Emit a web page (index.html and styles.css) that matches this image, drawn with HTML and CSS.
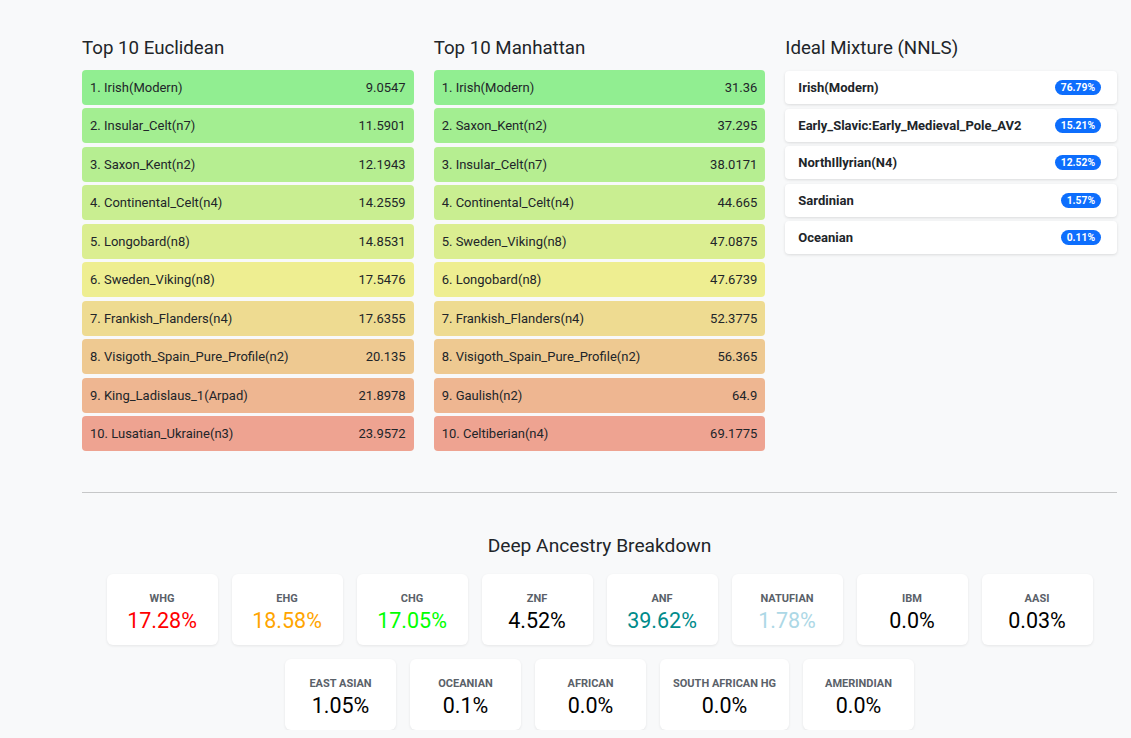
FILE: index.html
```html
<!DOCTYPE html>
<html lang="en">
<head>
<meta charset="utf-8">
<title>Ancestry Results</title>
<link rel="stylesheet" href="styles.css">
</head>
<body>
<main class="page">
  <div class="top">
    <section class="col">
      <h2 class="title">Top 10 Euclidean</h2>
      <ul class="dist-list">
        <li class="dist r1"><span>1. Irish(Modern)</span><span>9.0547</span></li>
        <li class="dist r2"><span>2. Insular_Celt(n7)</span><span>11.5901</span></li>
        <li class="dist r3"><span>3. Saxon_Kent(n2)</span><span>12.1943</span></li>
        <li class="dist r4"><span>4. Continental_Celt(n4)</span><span>14.2559</span></li>
        <li class="dist r5"><span>5. Longobard(n8)</span><span>14.8531</span></li>
        <li class="dist r6"><span>6. Sweden_Viking(n8)</span><span>17.5476</span></li>
        <li class="dist r7"><span>7. Frankish_Flanders(n4)</span><span>17.6355</span></li>
        <li class="dist r8"><span>8. Visigoth_Spain_Pure_Profile(n2)</span><span>20.135</span></li>
        <li class="dist r9"><span>9. King_Ladislaus_1(Arpad)</span><span>21.8978</span></li>
        <li class="dist r10"><span>10. Lusatian_Ukraine(n3)</span><span>23.9572</span></li>
      </ul>
    </section>
    <section class="col">
      <h2 class="title">Top 10 Manhattan</h2>
      <ul class="dist-list">
        <li class="dist r1"><span>1. Irish(Modern)</span><span>31.36</span></li>
        <li class="dist r2"><span>2. Saxon_Kent(n2)</span><span>37.295</span></li>
        <li class="dist r3"><span>3. Insular_Celt(n7)</span><span>38.0171</span></li>
        <li class="dist r4"><span>4. Continental_Celt(n4)</span><span>44.665</span></li>
        <li class="dist r5"><span>5. Sweden_Viking(n8)</span><span>47.0875</span></li>
        <li class="dist r6"><span>6. Longobard(n8)</span><span>47.6739</span></li>
        <li class="dist r7"><span>7. Frankish_Flanders(n4)</span><span>52.3775</span></li>
        <li class="dist r8"><span>8. Visigoth_Spain_Pure_Profile(n2)</span><span>56.365</span></li>
        <li class="dist r9"><span>9. Gaulish(n2)</span><span>64.9</span></li>
        <li class="dist r10"><span>10. Celtiberian(n4)</span><span>69.1775</span></li>
      </ul>
    </section>
    <section class="col">
      <h2 class="title">Ideal Mixture (NNLS)</h2>
      <ul class="mix-list">
        <li class="mix-item"><span class="mix-name">Irish(Modern)</span><span class="badge">76.79%</span></li>
        <li class="mix-item"><span class="mix-name">Early_Slavic:Early_Medieval_Pole_AV2</span><span class="badge">15.21%</span></li>
        <li class="mix-item"><span class="mix-name">NorthIllyrian(N4)</span><span class="badge">12.52%</span></li>
        <li class="mix-item"><span class="mix-name">Sardinian</span><span class="badge">1.57%</span></li>
        <li class="mix-item"><span class="mix-name">Oceanian</span><span class="badge">0.11%</span></li>
      </ul>
    </section>
  </div>

  <hr class="divider">

  <section class="deep">
    <h2 class="deep-title">Deep Ancestry Breakdown</h2>
    <div class="cards">
      <div class="card"><div class="label">WHG</div><div class="value c-red">17.28%</div></div>
      <div class="card"><div class="label">EHG</div><div class="value c-orange">18.58%</div></div>
      <div class="card"><div class="label">CHG</div><div class="value c-lime">17.05%</div></div>
      <div class="card"><div class="label">ZNF</div><div class="value">4.52%</div></div>
      <div class="card"><div class="label">ANF</div><div class="value c-teal">39.62%</div></div>
      <div class="card"><div class="label">NATUFIAN</div><div class="value c-lightblue">1.78%</div></div>
      <div class="card"><div class="label">IBM</div><div class="value">0.0%</div></div>
      <div class="card"><div class="label">AASI</div><div class="value">0.03%</div></div>
      <div class="card"><div class="label">EAST ASIAN</div><div class="value">1.05%</div></div>
      <div class="card"><div class="label">OCEANIAN</div><div class="value">0.1%</div></div>
      <div class="card"><div class="label">AFRICAN</div><div class="value">0.0%</div></div>
      <div class="card"><div class="label">SOUTH AFRICAN HG</div><div class="value">0.0%</div></div>
      <div class="card"><div class="label">AMERINDIAN</div><div class="value">0.0%</div></div>
    </div>
  </section>
</main>
</body>
</html>
```

FILE: styles.css
```css
* { box-sizing: border-box; }

html, body {
  margin: 0;
  padding: 0;
  background: #f8f9fa;
  color: #212529;
  font-family: Roboto, "Liberation Sans", sans-serif;
}

.page {
  width: 1035px;
  margin-left: 82px;
  padding-top: 37px;
}

.top {
  display: flex;
  gap: 20px;
  align-items: flex-start;
}

.col {
  flex: 1 1 0;
  min-width: 0;
}

.title {
  margin: 0 0 11px;
  font-size: 18.7px;
  font-weight: 400;
  line-height: 22px;
}

.dist-list, .mix-list {
  list-style: none;
  margin: 0;
  padding: 0;
  display: flex;
  flex-direction: column;
}

.dist-list { gap: 3.45px; }

.dist {
  height: 35px;
  display: flex;
  align-items: center;
  justify-content: space-between;
  padding: 0 8px;
  border-radius: 4px;
  font-size: 13px;
  color: #212529;
}

.r1 { background: hsl(120, 73%, 75%); }
.r2 { background: hsl(108, 73%, 75%); }
.r3 { background: hsl(96, 73%, 75%); }
.r4 { background: hsl(84, 73%, 75%); }
.r5 { background: hsl(72, 73%, 75%); }
.r6 { background: hsl(60, 73%, 75%); }
.r7 { background: hsl(48, 73%, 75%); }
.r8 { background: hsl(36, 73%, 75%); }
.r9 { background: hsl(24, 73%, 75%); }
.r10 { background: hsl(12, 73%, 75%); }

.mix-list {
  gap: 4.5px;
  padding-top: 1px;
}

.mix-item {
  height: 33px;
  display: flex;
  align-items: center;
  justify-content: space-between;
  padding: 0 16px 0 13px;
  background: #fff;
  border-radius: 4px;
  box-shadow: 0 1px 3px rgba(0, 0, 0, 0.12);
}

.mix-name {
  font-size: 13px;
  font-weight: 700;
  color: #212529;
}

.badge {
  background: #0d6efd;
  color: #fff;
  font-size: 10.3px;
  font-weight: 700;
  line-height: 15px;
  padding: 0 6px;
  border-radius: 8px;
}

.divider {
  border: 0;
  height: 1px;
  background: #c6c7c8;
  margin: 41px 0 0;
}

.deep {
  padding-top: 42px;
}

.deep-title {
  margin: 0 0 17px;
  text-align: center;
  font-size: 19.2px;
  font-weight: 400;
  line-height: 22px;
}

.cards {
  display: flex;
  flex-wrap: wrap;
  justify-content: center;
  gap: 14px;
}

.card {
  min-width: 111px;
  height: 71px;
  padding: 18px 13px 0;
  background: #fff;
  border-radius: 6px;
  box-shadow: 0 1px 3px rgba(0, 0, 0, 0.08);
  text-align: center;
}

.label {
  font-size: 11px;
  font-weight: 700;
  line-height: 14px;
  color: #5a6169;
  text-transform: uppercase;
}

.value {
  margin-top: 2px;
  font-size: 21.5px;
  line-height: 26px;
  color: #000;
}

.c-red { color: #ff0000; }
.c-orange { color: #ffa500; }
.c-lime { color: #00ff00; }
.c-teal { color: #008b8b; }
.c-lightblue { color: #add8e6; }
```
